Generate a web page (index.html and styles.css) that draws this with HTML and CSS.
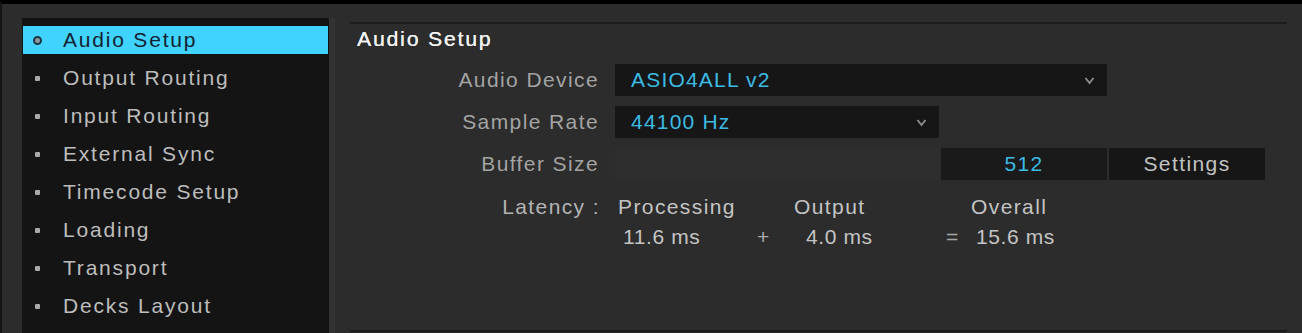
FILE: index.html
```html
<!DOCTYPE html>
<html>
<head>
<meta charset="utf-8">
<link rel="stylesheet" href="styles.css">
</head>
<body>
<div class="app">
  <nav class="sidebar">
    <ul class="menu">
      <li class="item selected"><span class="bullet"></span><span class="label">Audio Setup</span></li>
      <li class="item"><span class="bullet"></span><span class="label">Output Routing</span></li>
      <li class="item"><span class="bullet"></span><span class="label">Input Routing</span></li>
      <li class="item"><span class="bullet"></span><span class="label">External Sync</span></li>
      <li class="item"><span class="bullet"></span><span class="label">Timecode Setup</span></li>
      <li class="item"><span class="bullet"></span><span class="label">Loading</span></li>
      <li class="item"><span class="bullet"></span><span class="label">Transport</span></li>
      <li class="item"><span class="bullet"></span><span class="label">Decks Layout</span></li>
    </ul>
  </nav>
  <main class="panel">
    <h1 class="title">Audio Setup</h1>
    <div class="form">
      <div class="flabel">Audio Device</div>
      <div class="select wide"><span class="value">ASIO4ALL v2</span>
        <svg class="chev" width="11" height="9" viewBox="0 0 11 9"><polyline points="1.5,2 5.5,7 9.5,2" fill="none" stroke="#8a8a8a" stroke-width="2"/></svg>
      </div>
      <div class="flabel">Sample Rate</div>
      <div class="select narrow"><span class="value">44100 Hz</span>
        <svg class="chev" width="11" height="9" viewBox="0 0 11 9"><polyline points="1.5,2 5.5,7 9.5,2" fill="none" stroke="#8a8a8a" stroke-width="2"/></svg>
      </div>
      <div class="flabel">Buffer Size</div>
      <div class="buffer">
        <div class="slider"></div>
        <div class="bufval">512</div>
        <div class="btn">Settings</div>
      </div>
    </div>
    <div class="latency">
      <div class="lat-head">
        <span class="lat-label">Latency :</span>
        <span class="lat-col">Processing</span>
        <span class="lat-col">Output</span>
        <span class="lat-col">Overall</span>
      </div>
      <div class="lat-vals">
        <span></span>
        <span>11.6 ms</span>
        <span class="op">+</span>
        <span>4.0 ms</span>
        <span class="op">=</span>
        <span>15.6 ms</span>
      </div>
    </div>
  </main>
</div>
</body>
</html>
```

FILE: styles.css
```css
html, body {
  margin: 0;
  padding: 0;
  background: #2c2c2c;
  overflow: hidden;
}
body {
  font-family: "Liberation Sans", Arial, sans-serif;
}
.app {
  display: flex;
  align-items: flex-start;
  height: 329px;
  border-top: 4px solid #000;
  border-left: 2px solid #151515;
  box-sizing: content-box;
  overflow: hidden;
}
.sidebar {
  margin-top: 14px;
  margin-left: 20px;
  width: 307px;
  height: 330px;
  background: #141414;
  padding-top: 8px;
  box-sizing: border-box;
  box-shadow: 6px 0 0 #333333;
}
.menu {
  list-style: none;
  margin: 0;
  padding: 0;
  display: flex;
  flex-direction: column;
  gap: 10px;
}
.item {
  height: 28px;
  margin: 0 1px;
  display: flex;
  align-items: center;
  color: #bdbdbd;
  font-size: 21px;
  letter-spacing: 1.8px;
}
.item .bullet {
  width: 5px;
  height: 5px;
  margin-left: 12px;
  background: #a9a9a9;
  border-radius: 1px;
  flex: none;
}
.item .label {
  margin-left: 23px;
}
.item.selected {
  background: #3fd3fd;
  color: #14222f;
}
.item.selected .bullet {
  width: 9px;
  height: 9px;
  margin-left: 10px;
  border-radius: 50%;
  background: #8f9a9e;
  border: 2px solid #1d3644;
  box-sizing: border-box;
}
.item.selected .label {
  margin-left: 21px;
}
.panel {
  margin-top: 18px;
  margin-left: 21px;
  width: 937px;
  height: 310px;
  border-top: 2px solid #1c1c1c;
  border-bottom: 2px solid #1c1c1c;
  box-sizing: border-box;
}
.title {
  margin: 3px 0 0 0;
  padding-left: 7px;
  font-size: 21px;
  font-weight: normal;
  line-height: 24px;
  letter-spacing: 1.9px;
  color: #f2f2f2;
  text-shadow: 0.3px 0 0 #f2f2f2;
}
.form {
  margin-top: 13px;
  display: grid;
  grid-template-columns: 249px 1fr;
  grid-auto-rows: 32px;
  column-gap: 16px;
  row-gap: 10px;
  font-size: 21px;
  letter-spacing: 1.4px;
}
.flabel {
  text-align: right;
  color: #a3a3a3;
  line-height: 32px;
}
.select {
  background: #161616;
  display: flex;
  align-items: center;
  justify-content: space-between;
  padding: 0 12px 0 16px;
  box-sizing: border-box;
}
.select.wide { width: 492px; }
.select.narrow { width: 324px; }
.value {
  color: #3cbbe4;
  letter-spacing: 1.2px;
}
.chev {
  display: block;
}
.buffer {
  display: flex;
  gap: 2px;
}
.slider {
  width: 324px;
  background: #2e2e2e;
}
.bufval {
  width: 166px;
  background: #1a1a1a;
  color: #3cbbe4;
  text-align: center;
  line-height: 32px;
}
.btn {
  width: 156px;
  background: #161616;
  color: #c2c2c2;
  text-align: center;
  line-height: 32px;
}
.latency {
  margin-top: 15px;
  font-size: 21px;
  letter-spacing: 1.4px;
  color: #c4c4c4;
  line-height: 24px;
  display: flex;
  flex-direction: column;
  gap: 6px;
}
.lat-head {
  display: grid;
  grid-template-columns: 250px 176px 177px 1fr;
}
.lat-label {
  text-align: right;
  color: #b4b4b4;
}
.lat-col {
  padding-left: 18px;
}
.lat-vals {
  display: grid;
  grid-template-columns: 273px 134px 49px 140px 30px 1fr;
  letter-spacing: 0.6px;
}
.op {
  color: #a8a8a8;
}
```
